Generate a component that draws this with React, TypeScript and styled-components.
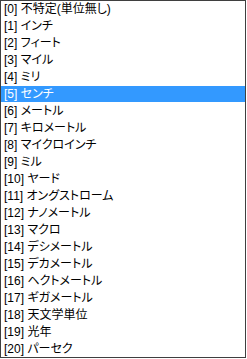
import styled, { createGlobalStyle } from 'styled-components';

const GlobalStyle = createGlobalStyle`
  html, body {
    margin: 0;
    padding: 0;
    background: #ffffff;
  }
`;

const ListBox = styled.ul`
  box-sizing: border-box;
  width: 246px;
  height: 358px;
  margin: 0;
  padding: 0;
  list-style: none;
  border: 1px solid #3f3f3f;
  background: #ffffff;
  overflow: hidden;
  font-family: "Liberation Sans", "Noto Sans CJK JP", sans-serif;
  font-size: 12px;
  font-feature-settings: "palt";
`;

const Item = styled.li<{ $selected?: boolean }>`
  height: 17px;
  line-height: 17px;
  padding-left: 3px;
  white-space: nowrap;
  color: ${(p) => (p.$selected ? '#ffffff' : '#000000')};
  background: ${(p) =>
    p.$selected ? 'linear-gradient(#3399ff 0 16px, transparent 16px)' : 'transparent'};
`;

const units = [
  '不特定(単位無し)',
  'インチ',
  'フィート',
  'マイル',
  'ミリ',
  'センチ',
  'メートル',
  'キロメートル',
  'マイクロインチ',
  'ミル',
  'ヤード',
  'オングストローム',
  'ナノメートル',
  'マクロ',
  'デシメートル',
  'デカメートル',
  'ヘクトメートル',
  'ギガメートル',
  '天文学単位',
  '光年',
  'パーセク',
];

const App = () => {
  const selected = 5;
  return (
    <>
      <GlobalStyle />
      <ListBox>
        {units.map((name, i) => (
          <Item key={i} $selected={i === selected}>
            [{i}] {name}
          </Item>
        ))}
      </ListBox>
    </>
  );
};

export default App;
